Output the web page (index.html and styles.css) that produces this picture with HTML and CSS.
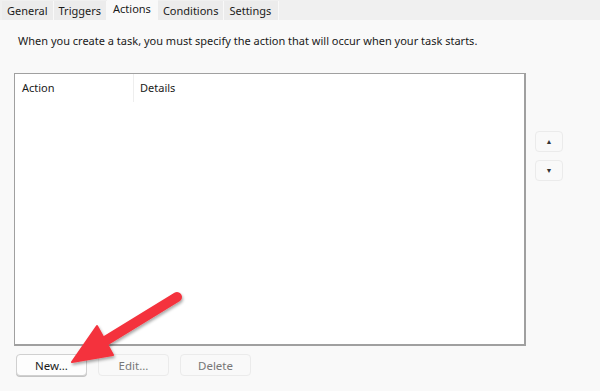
FILE: index.html
```html
<!DOCTYPE html>
<html lang="en">
<head>
<meta charset="UTF-8">
<title>Actions</title>
<link rel="stylesheet" href="styles.css">
</head>
<body>
<div class="tabs">
  <span class="tab">General</span>
  <span class="tab">Triggers</span>
  <span class="tab active">Actions</span>
  <span class="tab">Conditions</span>
  <span class="tab">Settings</span>
</div>

<div class="page">
  <p class="intro">When you create a task, you must specify the action that will occur when your task starts.</p>

  <div class="row">
    <div class="list">
      <div class="cols">
        <div class="col c1">Action</div>
        <div class="col c2">Details</div>
      </div>
    </div>
    <div class="side">
      <button class="mv">&#9650;</button>
      <button class="mv">&#9660;</button>
    </div>
  </div>

  <div class="btns">
    <button class="btn primary">New...</button>
    <button class="btn">Edit...</button>
    <button class="btn">Delete</button>
  </div>
</div>

<!-- callout arrow -->
<svg class="arrow" width="600" height="391" viewBox="0 0 600 391">
  <defs>
    <filter id="sh" x="-20%" y="-20%" width="140%" height="140%">
      <feDropShadow dx="1" dy="2" stdDeviation="1.5" flood-color="#000" flood-opacity=".35"/>
    </filter>
  </defs>
  <g filter="url(#sh)" fill="#f4333d" stroke="#f4333d">
    <line x1="177" y1="297" x2="102" y2="343" stroke-width="10" stroke-linecap="round"/>
    <polygon points="72,362 97,326 113,355" stroke-width="2" stroke-linejoin="round"/>
  </g>
</svg>
</body>
</html>
```

FILE: styles.css
```css
body{margin:0;background:#f9f9f9;color:#1a1a1a;font-family:"Noto Sans","Open Sans",sans-serif;font-size:11px;position:relative;height:391px;overflow:hidden}
/* tab strip */
.tabs{display:flex;align-items:flex-end;height:20px;background:#f0f0f0;padding-left:2px}
.tab{height:19px;line-height:20px;padding:0 5px;background:#ececec;border-right:1px solid #f9f9f9;color:#1a1a1a}
.tab.active{height:20px;line-height:17px;background:#f9f9f9;padding:0 6px}
.tab:last-child{padding-right:7px}
/* body */
.page{padding:0 0 0 14px}
.intro{margin:0;padding:13px 0 0 4px;height:40px;box-sizing:border-box;line-height:16px}
.row{display:flex;margin-top:13px;height:273px}
.list{width:512px;background:#fff;border:2px solid #a0a0a0;border-top-width:1px;border-left-width:1px;box-sizing:border-box}
.cols{display:flex;height:28px}
.col{padding:6px 0 0 7px;line-height:16px}
.c1{width:111px;border-right:1px solid #eeeeee}
.c2{padding-left:6px}
.side{display:flex;flex-direction:column;gap:8px;padding:58px 0 0 9px}
.mv{width:28px;height:21px;border:1px solid #ebebeb;border-radius:4px;background:#f9f9f9;color:#333;font-size:7px;padding:0;cursor:pointer}
/* buttons */
.btns{display:flex;gap:11px;padding:8px 0 0 2px}
.btn{width:71px;height:22px;font:inherit;font-size:11.5px;color:#777;background:#f9f9f9;border:1px solid #ebebeb;border-radius:4px;padding:0}
.btn.primary{color:#1a1a1a;background:#fdfdfd;border-color:#d0d0d0;box-shadow:0 1px 0 #c4c4c4}
.arrow{position:absolute;left:0;top:0;pointer-events:none}
```
